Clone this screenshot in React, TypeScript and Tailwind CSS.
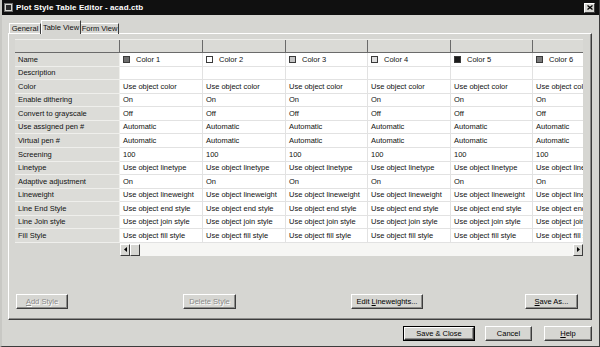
import React from 'react';

const rows: { label: string; value: string }[] = [
  { label: 'Name', value: '' },
  { label: 'Description', value: '' },
  { label: 'Color', value: 'Use object color' },
  { label: 'Enable dithering', value: 'On' },
  { label: 'Convert to grayscale', value: 'Off' },
  { label: 'Use assigned pen #', value: 'Automatic' },
  { label: 'Virtual pen #', value: 'Automatic' },
  { label: 'Screening', value: '100' },
  { label: 'Linetype', value: 'Use object linetype' },
  { label: 'Adaptive adjustment', value: 'On' },
  { label: 'Lineweight', value: 'Use object lineweight' },
  { label: 'Line End Style', value: 'Use object end style' },
  { label: 'Line Join style', value: 'Use object join style' },
  { label: 'Fill Style', value: 'Use object fill style' },
];

const styles = [
  { name: 'Color 1', swatch: 'bg-[#6e6e6e]' },
  { name: 'Color 2', swatch: 'bg-white' },
  { name: 'Color 3', swatch: 'bg-[#c4c4c4]' },
  { name: 'Color 4', swatch: 'bg-[#dedede]' },
  { name: 'Color 5', swatch: 'bg-[#1c1c1c]' },
  { name: 'Color 6', swatch: 'bg-[#7a7a7a]' },
];

const colWidths = ['w-[83px]', 'w-[83px]', 'w-[82px]', 'w-[83px]', 'w-[82px]', 'w-[50px]'];

function Button({ children, w, disabled, isDefault }: { children: React.ReactNode; w: string; disabled?: boolean; isDefault?: boolean }) {
  return (
    <div className={`${w} h-[15px] ${isDefault ? 'border border-black' : ''}`}>
      <div className="h-full flex items-center justify-center bg-[#d6d6d2] border-t border-l border-t-white border-l-white border-r border-b border-r-[#3c3c3c] border-b-[#3c3c3c] shadow-[inset_-1px_-1px_0_#8c8c8a]">
        <span className={`whitespace-nowrap ${disabled ? 'text-[#8a8a88] [text-shadow:1px_1px_0_#ffffff]' : 'text-black'}`}>{children}</span>
      </div>
    </div>
  );
}

function Arrow({ dir }: { dir: 'left' | 'right' }) {
  return (
    <div className="w-[10px] h-[12px] flex items-center justify-center bg-[#d6d6d2] border-t border-l border-white border-r border-b border-r-[#3c3c3c] border-b-[#3c3c3c]">
      <svg width="3" height="5" viewBox="0 0 3 5">
        {dir === 'left' ? <path d="M3 0 L0 2.5 L3 5 Z" fill="#000" /> : <path d="M0 0 L3 2.5 L0 5 Z" fill="#000" />}
      </svg>
    </div>
  );
}

export default function App() {
  return (
    <div
      className="w-[600px] h-[347px] bg-[#d6d6d2] border-r border-b border-r-[#3c3c3c] border-b-[#3c3c3c] border-l-2 border-l-[#c8c8c4] flex flex-col overflow-hidden text-[7.5px] text-[#111]"
      style={{ fontFamily: '"Liberation Sans", Arial, sans-serif' }}
    >
      {/* title bar */}
      <div className="h-[15px] bg-[#101010] flex items-center pl-[2px] pr-[4px] shrink-0">
        <div className="w-[9px] h-[9px] bg-[#d6d6d2] border border-[#707070] flex items-center justify-center">
          <div className="w-[5px] h-[5px] bg-[#2a2a2a]" />
        </div>
        <span className="ml-[3px] text-white font-bold text-[8px] tracking-[0.1px] whitespace-nowrap">Plot Style Table Editor - acad.ctb</span>
        <div className="ml-auto w-[11px] h-[10px] bg-[#d6d6d2] border-t border-l border-white border-r border-b border-r-[#3c3c3c] border-b-[#3c3c3c] flex items-center justify-center">
          <svg width="6" height="5" viewBox="0 0 6 5">
            <path d="M0.5 0.5 L5.5 4.5 M5.5 0.5 L0.5 4.5" stroke="#000" strokeWidth="1.3" />
          </svg>
        </div>
      </div>

      {/* tabs */}
      <div className="flex items-end h-[16px] pl-[7px] mt-[2px] shrink-0 whitespace-nowrap">
        <div className="h-[11px] w-[32px] flex items-center justify-center border-t border-l border-white border-r border-r-[#3c3c3c] relative top-[1px]">
          General
        </div>
        <div className="h-[14px] w-[40px] flex items-center justify-center bg-[#d6d6d2] border-t border-l border-white border-r border-r-[#3c3c3c] relative top-[1px] z-10">
          Table View
        </div>
        <div className="h-[11px] w-[38px] flex items-center justify-center border-t border-white border-r border-r-[#3c3c3c] relative top-[1px]">
          Form View
        </div>
      </div>

      {/* panel */}
      <div className="ml-[6px] mr-[7px] h-[287px] border-t border-l border-white border-r border-b border-r-[#3c3c3c] border-b-[#3c3c3c] shadow-[inset_-1px_-1px_0_#8c8c8a] pl-[6px] pt-[5px] shrink-0 flex flex-col">
        <div className="w-[568px] flex flex-col">
          {/* header row */}
          <div className="flex h-[14px] bg-[#dadad6] border-t border-t-[#efefec] border-b border-b-[#6a6a6a]">
            <div className="w-[105px] border-r border-r-[#6a6a6a]" />
            {colWidths.map((w, i) => (
              <div key={i} className={`${w} ${i < 5 ? 'border-r border-r-[#6a6a6a]' : ''}`} />
            ))}
          </div>
          {/* data rows */}
          {rows.map((r, ri) => (
            <div key={r.label} className="flex h-[13.57px]">
              <div className="w-[105px] bg-[#dcdcd8] border-b border-b-[#efefec] border-r border-r-[#efefec] pl-[3px] flex items-center whitespace-nowrap">
                {r.label}
              </div>
              {colWidths.map((w, ci) => (
                <div
                  key={ci}
                  className={`${w} bg-white border-b border-b-[#e2e2e2] ${ci < 5 ? 'border-r border-r-[#e2e2e2]' : ''} pl-[3px] flex items-center whitespace-nowrap overflow-hidden`}
                >
                  {ri === 0 ? (
                    <>
                      <span className={`w-[7px] h-[7px] ${styles[ci].swatch} border border-[#3a3a3a] shrink-0`} />
                      <span className="ml-[6px]">{styles[ci].name}</span>
                    </>
                  ) : (
                    r.value
                  )}
                </div>
              ))}
            </div>
          ))}
          {/* horizontal scrollbar */}
          <div className="flex h-[13px]">
            <div className="w-[105px]" />
            <div className="flex-1 bg-[#f6f6f4] flex items-start pt-[1px]">
              <Arrow dir="left" />
              <div className="w-[10px] h-[12px] bg-[#d6d6d2] border-t border-l border-white border-r border-b border-r-[#3c3c3c] border-b-[#3c3c3c]" />
              <div className="ml-auto">
                <Arrow dir="right" />
              </div>
            </div>
          </div>
        </div>

        {/* panel buttons */}
        <div className="flex mt-[38px] pl-[1px]">
          <Button w="w-[52px]" disabled>
            <span className="underline">A</span>dd Style
          </Button>
          <div className="ml-[115px]">
            <Button w="w-[53px]" disabled>Delete Style</Button>
          </div>
          <div className="ml-[115px]">
            <Button w="w-[72px]">
              Edit <span className="underline">L</span>ineweights...
            </Button>
          </div>
          <div className="ml-[102px]">
            <Button w="w-[53px]">
              <span className="underline">S</span>ave As...
            </Button>
          </div>
        </div>
      </div>

      {/* dialog buttons */}
      <div className="flex mt-[6px] pl-[401px]">
        <Button w="w-[72px]" isDefault>Save &amp; Close</Button>
        <div className="ml-[10px]">
          <Button w="w-[47px]">Cancel</Button>
        </div>
        <div className="ml-[12px]">
          <Button w="w-[48px]">
            <span className="underline">H</span>elp
          </Button>
        </div>
      </div>
    </div>
  );
}
